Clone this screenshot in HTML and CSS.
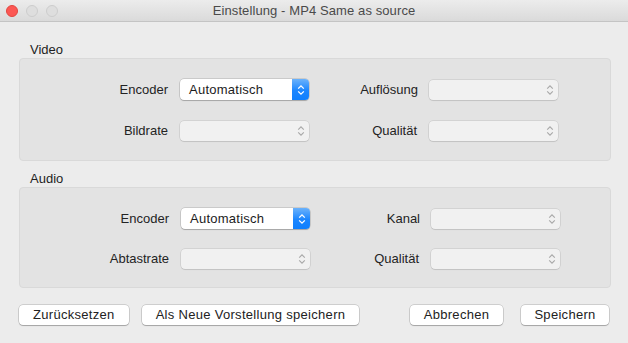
FILE: index.html
```html
<!DOCTYPE html>
<html lang="de">
<head>
<meta charset="utf-8">
<title>Einstellung - MP4 Same as source</title>
<link rel="stylesheet" href="styles.css">
</head>
<body>
<div class="window">
  <header class="titlebar">
    <div class="lights">
      <span class="light red"></span>
      <span class="light"></span>
      <span class="light"></span>
    </div>
    <div class="title">Einstellung - MP4 Same as source</div>
  </header>

  <main class="content">
    <section class="group">
      <div class="group-label">Video</div>
      <div class="group-box">
        <div class="form-grid">
          <label class="field-label">Encoder</label>
          <div class="popup active">
            <span class="popup-text">Automatisch</span>
            <span class="popup-arrows blue">
              <svg width="8" height="12" viewBox="0 0 8 12"><path d="M1.2 4.6 4 1.8 6.8 4.6M1.2 7.4 4 10.2 6.8 7.4" fill="none" stroke="#fff" stroke-width="1.3"/></svg>
            </span>
          </div>
          <label class="field-label">Auflösung</label>
          <div class="popup disabled">
            <span class="popup-text"></span>
            <span class="popup-arrows">
              <svg width="8" height="12" viewBox="0 0 8 12"><path d="M1.2 4.6 4 1.8 6.8 4.6M1.2 7.4 4 10.2 6.8 7.4" fill="none" stroke="#a8a8a8" stroke-width="1.1"/></svg>
            </span>
          </div>

          <label class="field-label">Bildrate</label>
          <div class="popup disabled">
            <span class="popup-text"></span>
            <span class="popup-arrows">
              <svg width="8" height="12" viewBox="0 0 8 12"><path d="M1.2 4.6 4 1.8 6.8 4.6M1.2 7.4 4 10.2 6.8 7.4" fill="none" stroke="#a8a8a8" stroke-width="1.1"/></svg>
            </span>
          </div>
          <label class="field-label">Qualität</label>
          <div class="popup disabled">
            <span class="popup-text"></span>
            <span class="popup-arrows">
              <svg width="8" height="12" viewBox="0 0 8 12"><path d="M1.2 4.6 4 1.8 6.8 4.6M1.2 7.4 4 10.2 6.8 7.4" fill="none" stroke="#a8a8a8" stroke-width="1.1"/></svg>
            </span>
          </div>
        </div>
      </div>
    </section>

    <section class="group audio">
      <div class="group-label">Audio</div>
      <div class="group-box">
        <div class="form-grid">
          <label class="field-label">Encoder</label>
          <div class="popup active">
            <span class="popup-text">Automatisch</span>
            <span class="popup-arrows blue">
              <svg width="8" height="12" viewBox="0 0 8 12"><path d="M1.2 4.6 4 1.8 6.8 4.6M1.2 7.4 4 10.2 6.8 7.4" fill="none" stroke="#fff" stroke-width="1.3"/></svg>
            </span>
          </div>
          <label class="field-label">Kanal</label>
          <div class="popup disabled">
            <span class="popup-text"></span>
            <span class="popup-arrows">
              <svg width="8" height="12" viewBox="0 0 8 12"><path d="M1.2 4.6 4 1.8 6.8 4.6M1.2 7.4 4 10.2 6.8 7.4" fill="none" stroke="#a8a8a8" stroke-width="1.1"/></svg>
            </span>
          </div>

          <label class="field-label">Abtastrate</label>
          <div class="popup disabled">
            <span class="popup-text"></span>
            <span class="popup-arrows">
              <svg width="8" height="12" viewBox="0 0 8 12"><path d="M1.2 4.6 4 1.8 6.8 4.6M1.2 7.4 4 10.2 6.8 7.4" fill="none" stroke="#a8a8a8" stroke-width="1.1"/></svg>
            </span>
          </div>
          <label class="field-label">Qualität</label>
          <div class="popup disabled">
            <span class="popup-text"></span>
            <span class="popup-arrows">
              <svg width="8" height="12" viewBox="0 0 8 12"><path d="M1.2 4.6 4 1.8 6.8 4.6M1.2 7.4 4 10.2 6.8 7.4" fill="none" stroke="#a8a8a8" stroke-width="1.1"/></svg>
            </span>
          </div>
        </div>
      </div>
    </section>

    <footer class="button-bar">
      <button class="btn btn-reset">Zurücksetzen</button>
      <button class="btn btn-save-as">Als Neue Vorstellung speichern</button>
      <span class="spacer"></span>
      <button class="btn btn-cancel">Abbrechen</button>
      <button class="btn btn-save">Speichern</button>
    </footer>
  </main>
</div>
</body>
</html>
```

FILE: styles.css
```css
* {
  box-sizing: border-box;
}

html, body {
  margin: 0;
  padding: 0;
}

body {
  width: 628px;
  height: 343px;
  overflow: hidden;
  background: #ececec;
  font-family: "Liberation Sans", Arial, sans-serif;
  font-size: 13px;
  color: #222;
}

.window {
  width: 628px;
  height: 343px;
  background: #ececec;
  display: flex;
  flex-direction: column;
}

.titlebar {
  height: 22px;
  flex: none;
  display: flex;
  align-items: center;
  position: relative;
  background: linear-gradient(#ececec, #dadada);
  border-bottom: 1px solid #c4c4c4;
}

.lights {
  display: flex;
  gap: 8px;
  padding-left: 6px;
}

.light {
  width: 12px;
  height: 12px;
  border-radius: 50%;
  background: #dedede;
  border: 1px solid #cdcdcd;
}

.light.red {
  background: #fc5753;
  border-color: #e2463f;
}

.title {
  position: absolute;
  left: 0;
  right: 0;
  top: 0;
  line-height: 21px;
  text-align: center;
  color: #4a4a4a;
  font-size: 13px;
  letter-spacing: 0.1px;
}

.content {
  flex: 1;
  padding: 20px 17px 0 19px;
  display: flex;
  flex-direction: column;
}

.group-label {
  line-height: 16px;
  padding-left: 11px;
  color: #1e1e1e;
}

.group.audio {
  margin-top: 10px;
}

.group-box {
  background: #e3e3e3;
  border: 1px solid #d9d9d9;
  border-radius: 4px;
  height: 103px;
  padding-top: 20px;
}

.group.audio .group-box {
  height: 101px;
}

.form-grid {
  display: grid;
  grid-template-columns: 160px 129px 120px 129px;
  grid-auto-rows: 21px;
  row-gap: 20px;
  align-items: center;
}

.group.audio .form-grid {
  grid-template-columns: 161px 129px 121px 129px;
  row-gap: 19px;
}

.field-label {
  text-align: right;
  padding-right: 12px;
  color: #232323;
}

.field-label:nth-child(3) {
  padding-right: 11px;
}

.popup {
  height: 21px;
  border-radius: 4px;
  display: flex;
  align-items: stretch;
}

.popup.active {
  background: #fff;
  box-shadow: 0 0 0 0.5px rgba(0, 0, 0, 0.22), 0 1px 1px rgba(0, 0, 0, 0.18);
}

.popup.disabled {
  height: 20px;
  background: #f1f1f1;
  box-shadow: 0 0 0 0.5px rgba(0, 0, 0, 0.14), 0 1px 1px rgba(0, 0, 0, 0.08);
}

.popup-text {
  flex: 1;
  padding-left: 9px;
  line-height: 21px;
  letter-spacing: 0.25px;
  color: #1c1c1c;
}

.popup-arrows {
  width: 17px;
  display: flex;
  align-items: center;
  justify-content: center;
  border-radius: 0 4px 4px 0;
}

.popup-arrows.blue {
  background: linear-gradient(#6bb2fb, #1b86ff 55%, #0f7ffd);
}

.button-bar {
  display: flex;
  align-items: center;
  margin-top: 17px;
  padding-right: 2px;
}

.btn {
  height: 20px;
  font-family: inherit;
  font-size: 13px;
  letter-spacing: 0.3px;
  color: #222;
  background: #fff;
  border: none;
  border-radius: 4px;
  box-shadow: 0 0 0 0.5px rgba(0, 0, 0, 0.25), 0 1px 1px rgba(0, 0, 0, 0.2);
  padding: 0 14px;
  margin: 0;
  line-height: 20px;
}

.btn-save-as {
  margin-left: 13px;
}

.spacer {
  flex: 1;
}

.btn-cancel {
  min-width: 93px;
  padding: 0 12px;
}

.btn-save {
  margin-left: 18px;
  min-width: 88px;
  padding: 0 12px;
}
```
